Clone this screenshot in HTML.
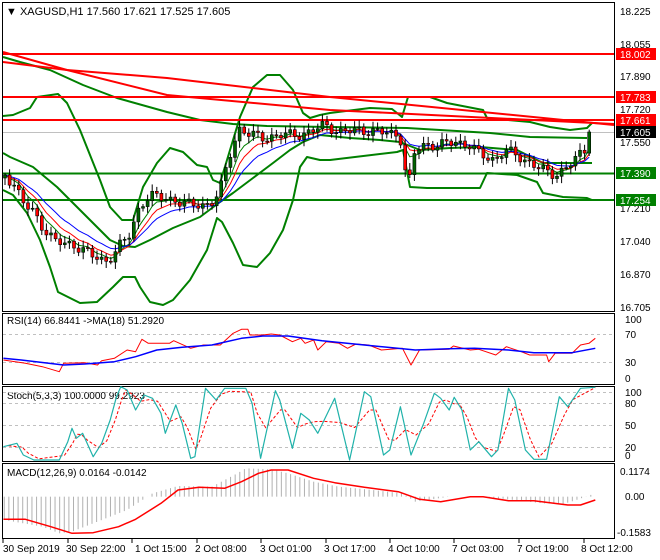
<!DOCTYPE html>
<html><head><meta charset="utf-8"><style>
html,body{margin:0;padding:0;background:#fff;}
svg{display:block;font-family:"Liberation Sans",Tahoma,sans-serif;}
</style></head><body>
<svg id="s" width="660" height="560" viewBox="0 0 660 560" xmlns="http://www.w3.org/2000/svg">
<rect width="660" height="560" fill="#fff"/>
<g id="main"></g>
<!-- frames -->
<g fill="none" stroke="#000" stroke-width="1">
<rect x="2.5" y="2.5" width="612" height="309"/>
<rect x="2.5" y="313.5" width="612" height="71"/>
<rect x="2.5" y="386.5" width="612" height="75"/>
<rect x="2.5" y="463.5" width="612" height="75"/>
</g>
<g font-size="10" fill="#000">
<text x="620" y="15">18.225</text>
<text x="620" y="48">18.055</text>
<text x="620" y="80">17.890</text>
<text x="620" y="113">17.720</text>
<text x="620" y="146">17.550</text>
<text x="620" y="212">17.210</text>
<text x="620" y="245">17.040</text>
<text x="620" y="278">16.870</text>
<text x="620" y="311">16.705</text>
</g>
<g font-size="10">
<rect x="616" y="48" width="40" height="12" fill="#f00"/><text x="620" y="58" fill="#fff">18.002</text>
<rect x="616" y="91" width="40" height="12" fill="#f00"/><text x="620" y="101" fill="#fff">17.783</text>
<rect x="616" y="114" width="40" height="12" fill="#f00"/><text x="620" y="124" fill="#fff">17.661</text>
<rect x="616" y="126" width="40" height="12" fill="#000"/><text x="620" y="136" fill="#fff">17.605</text>
<rect x="616" y="167" width="40" height="12" fill="#008000"/><text x="620" y="177" fill="#fff">17.390</text>
<rect x="616" y="194" width="40" height="12" fill="#008000"/><text x="620" y="204" fill="#fff">17.254</text>
</g>
<text x="6" y="15" font-size="11" fill="#000">▼ XAGUSD,H1  17.560 17.621 17.525 17.605</text>
<g font-size="10" fill="#000">
<text x="7" y="324">RSI(14) 66.8441  -&gt;MA(18) 51.2920</text>
<text x="7" y="399">Stoch(5,3,3) 100.0000 99.2923</text>
<text x="7" y="476">MACD(12,26,9) 0.0164 -0.0142</text>
<text x="625" y="323">100</text><text x="625" y="338">70</text><text x="625" y="366">30</text><text x="625" y="382">0</text>
<text x="625" y="396">100</text><text x="625" y="407">80</text><text x="625" y="429">50</text><text x="625" y="451">20</text><text x="625" y="459">0</text>
<text x="620" y="475">0.1174</text><text x="625" y="500">0.00</text><text x="617" y="536">-0.1583</text>
</g>
<g font-size="10" fill="#000">
<text x="3" y="552">30 Sep 2019</text>
<text x="66" y="552">30 Sep 22:00</text>
<text x="135" y="552">1 Oct 15:00</text>
<text x="195" y="552">2 Oct 08:00</text>
<text x="260" y="552">3 Oct 01:00</text>
<text x="324" y="552">3 Oct 17:00</text>
<text x="388" y="552">4 Oct 10:00</text>
<text x="452" y="552">7 Oct 03:00</text>
<text x="517" y="552">7 Oct 19:00</text>
<text x="581" y="552">8 Oct 12:00</text>
</g>
<g stroke="#000"><path d="M3 539v4M68 539v4M132 539v4M197 539v4M261 539v4M326 539v4M390 539v4M454 539v4M519 539v4M584 539v4"/></g>
<g id="sub"></g>
</svg>
<script>
var NS="http://www.w3.org/2000/svg";
function el(p,t,a){var e=document.createElementNS(NS,t);for(var k in a)e.setAttribute(k,a[k]);p.appendChild(e);return e;}
function pl(p,pts,c,w,extra){var a={points:pts.map(function(q){return q[0].toFixed(1)+","+q[1].toFixed(1)}).join(" "),fill:"none",stroke:c,"stroke-width":w,"stroke-linejoin":"round"};for(var k in extra)a[k]=extra[k];return el(p,"polyline",a);}
function interp(pts,x){for(var i=0;i<pts.length-1;i++){if(x>=pts[i][0]&&x<=pts[i+1][0]){var t=(x-pts[i][0])/(pts[i+1][0]-pts[i][0]||1);return pts[i][1]+t*(pts[i+1][1]-pts[i][1]);}}return x<pts[0][0]?pts[0][1]:pts[pts.length-1][1];}
var M=document.getElementById("main"),S=document.getElementById("sub");
// grid dashed in subpanels
[334,362].forEach(function(y){el(S,"line",{x1:3,x2:614,y1:y+.5,y2:y+.5,stroke:"#c0c0c0","stroke-dasharray":"3,3"})});
[392,403,425,447].forEach(function(y){el(S,"line",{x1:3,x2:614,y1:y+.5,y2:y+.5,stroke:"#c0c0c0","stroke-dasharray":"3,3"})});
// gray price line
el(M,"line",{x1:3,x2:614,y1:132.5,y2:132.5,stroke:"#c0c0c0"});
// bollinger etc
var G="#008000";
pl(M,[[3,116],[13,115],[30,108],[37,97],[58,94],[67,103],[80,130],[100,180],[110,207],[122,220],[133,220],[143,187],[157,163],[170,148],[183,152],[197,165],[207,167],[213,180],[220,183],[227,160],[240,117],[253,87],[267,75],[280,75],[293,90],[303,113],[310,118],[320,115],[330,113],[370,108],[392,109],[402,117],[408,97],[430,97],[447,103],[483,110],[487,118],[530,122],[550,127],[570,130],[587,128],[592,123]],G,2);
pl(M,[[3,190],[13,195],[27,213],[40,240],[50,267],[58,292],[80,303],[97,302],[113,287],[123,277],[135,277],[140,287],[150,302],[163,305],[173,300],[190,280],[207,250],[217,218],[222,222],[233,243],[243,265],[257,267],[270,253],[283,230],[293,200],[300,167],[307,157],[320,160],[330,160],[397,152],[403,150],[410,187],[427,188],[480,188],[487,173],[517,175],[537,182],[543,193],[563,197],[587,198],[592,200]],G,2);
pl(M,[[3,153],[10,157],[33,167],[57,187],[77,207],[97,227],[110,240],[123,246],[135,247],[150,240],[173,228],[200,217],[220,202],[233,193],[253,178],[273,163],[290,150],[303,142],[320,135],[350,138],[380,140],[400,142],[420,150],[450,148],[480,147],[517,150],[543,163],[563,163],[592,163]],G,2);
pl(M,[[3,57],[20,62],[50,70],[83,85],[117,98],[167,112],[200,120],[233,124],[267,126],[330,127],[407,128],[490,133],[530,137],[587,138]],G,2);
pl(M,[[3,173.5],[614,173.5]],G,2);pl(M,[[3,200],[614,200]],G,2);
var R="#ff0000";
pl(M,[[3,54],[614,54]],R,2);pl(M,[[3,97],[614,97]],R,2);pl(M,[[3,120],[614,120]],R,2);
pl(M,[[3,52],[67,70],[167,95],[330,110],[614,124]],R,2);
pl(M,[[3,62],[67,70],[167,78],[330,97],[614,125]],R,2);
// candles
var path=[[5,175],[15,185],[25,205],[35,215],[45,230],[55,240],[65,245],[75,245],[85,250],[95,258],[105,262],[112,255],[120,245],[130,235],[140,205],[150,195],[160,198],[175,200],[190,205],[205,205],[215,200],[222,185],[228,160],[235,140],[240,128],[250,135],[265,138],[280,135],[295,135],[310,132],[325,125],[340,132],[360,130],[380,132],[400,135],[405,170],[410,180],[415,150],[425,145],[440,145],[455,142],[470,145],[480,155],[495,160],[505,150],[515,155],[525,160],[535,165],[545,172],[555,175],[565,168],[575,160],[585,150],[592,132]];
var cl=[],xs=[];for(var x=5,i=0;x<=592;x+=4.6,i++){xs.push(x);cl.push(interp(path,x)+Math.sin(i*1.7)*4+Math.sin(i*0.9)*2);}
cl[cl.length-1]=132;
var prev=cl[0]+3;
function ema(n,c){var k=2/(n+1),v=cl[0],o=[];for(var i=0;i<cl.length;i++){v=cl[i]*k+v*(1-k);o.push([xs[i],v]);}pl(M,o,c,1);}
ema(5,"#008000");ema(8,"#ff0000");ema(13,"#0000ff");
for(var i=0;i<cl.length;i++){var o=prev,c=cl[i],x=xs[i];var hi=Math.min(o,c)-2-Math.abs(Math.sin(i*2.3))*5,lo=Math.max(o,c)+2+Math.abs(Math.cos(i*1.3))*5;
el(M,"line",{x1:x,x2:x,y1:hi,y2:lo,stroke:"#000"});
var t=Math.min(o,c),h=Math.max(1,Math.abs(o-c));
el(M,"rect",{x:x-1.5,y:t,width:3,height:h,fill:c<o?"#006400":"#ff0000",stroke:"#000","stroke-width":.6});prev=c;}
// subpanels, zoom coords transform
function T(a){return a.map(function(q){return [q[0]/2.36,q[1]/3+300];});}
pl(S,T([[8,180],[60,190],[100,200],[140,215],[150,190],[200,188],[230,195],[240,182],[270,175],[300,150],[320,155],[335,118],[350,130],[400,130],[410,122],[450,145],[480,135],[520,135],[550,100],[570,88],[585,88],[590,105],[620,105],[640,102],[660,105],[690,125],[710,115],[720,130],[740,120],[750,150],[770,125],[800,130],[820,145],[840,132],[870,135],[900,150],[950,145],[970,195],[990,150],[1060,148],[1070,138],[1110,150],[1130,148],[1170,165],[1195,140],[1230,155],[1250,165],[1290,165],[1295,185],[1310,160],[1350,160],[1370,135],[1390,130],[1405,115]]),"#ff0000",1);
pl(S,T([[8,175],[50,180],[150,195],[200,192],[270,185],[320,170],[370,150],[430,142],[500,135],[570,115],[620,108],[680,108],[760,122],[860,135],[980,150],[1060,146],[1120,145],[1200,150],[1260,158],[1350,158],[1405,145]]),"#0000ff",1.5);
var st=[[8,440],[40,430],[55,465],[80,480],[140,480],[160,425],[170,385],[180,415],[195,400],[220,470],[240,430],[260,360],[275,290],[285,260],[300,270],[320,330],[340,285],[360,295],[380,340],[390,400],[415,315],[430,370],[450,475],[460,470],[485,265],[510,300],[530,265],[580,265],[595,310],[615,475],[650,272],[660,300],[690,445],[710,340],[730,360],[750,400],[790,295],[825,480],[860,275],[875,290],[905,465],[920,450],[945,320],[970,465],[1000,370],[1025,280],[1040,295],[1060,330],[1072,292],[1090,330],[1110,450],[1130,425],[1160,470],[1175,450],[1200,265],[1215,300],[1240,450],[1260,478],[1290,478],[1320,290],[1340,320],[1370,265],[1405,262]];
var sd=[];for(var i=0;i<st.length;i++){var a=st[Math.max(0,i-1)][1],b=st[i][1],c=st[Math.min(st.length-1,i+1)][1];sd.push([Math.min(1405,st[i][0]+12),(a+2*b+c)/4]);}
pl(S,T(sd),"#ff0000",1,{"stroke-dasharray":"3,2"});
pl(S,T(st),"#20b2aa",1.2);
var hb=[[10,660],[100,680],[140,700],[170,695],[220,670],[300,630],[360,580],[420,558],[500,560],[560,520],[580,505],[640,508],[680,520],[740,545],[800,560],[880,570],[950,580],[980,605],[1010,600],[1060,590],[1130,590],[1200,598],[1280,610],[1330,612],[1360,600],[1405,580]];
for(var x=10;x<=1405;x+=10.9){var v=interp(hb,x);el(S,"line",{x1:x/2.36,x2:x/2.36,y1:590/3+300,y2:v/3+300,stroke:"#b0b0b0"});}
pl(S,T([[8,658],[60,658],[120,680],[170,700],[220,698],[280,680],[320,658],[380,610],[420,570],[470,562],[530,565],[570,545],[610,520],[640,510],[680,510],[740,535],[790,548],[860,562],[940,575],[990,598],[1040,605],[1110,590],[1140,590],[1200,602],[1260,602],[1340,615],[1370,615],[1405,600]]),"#ff0000",1.5);
</script>
</body></html>
